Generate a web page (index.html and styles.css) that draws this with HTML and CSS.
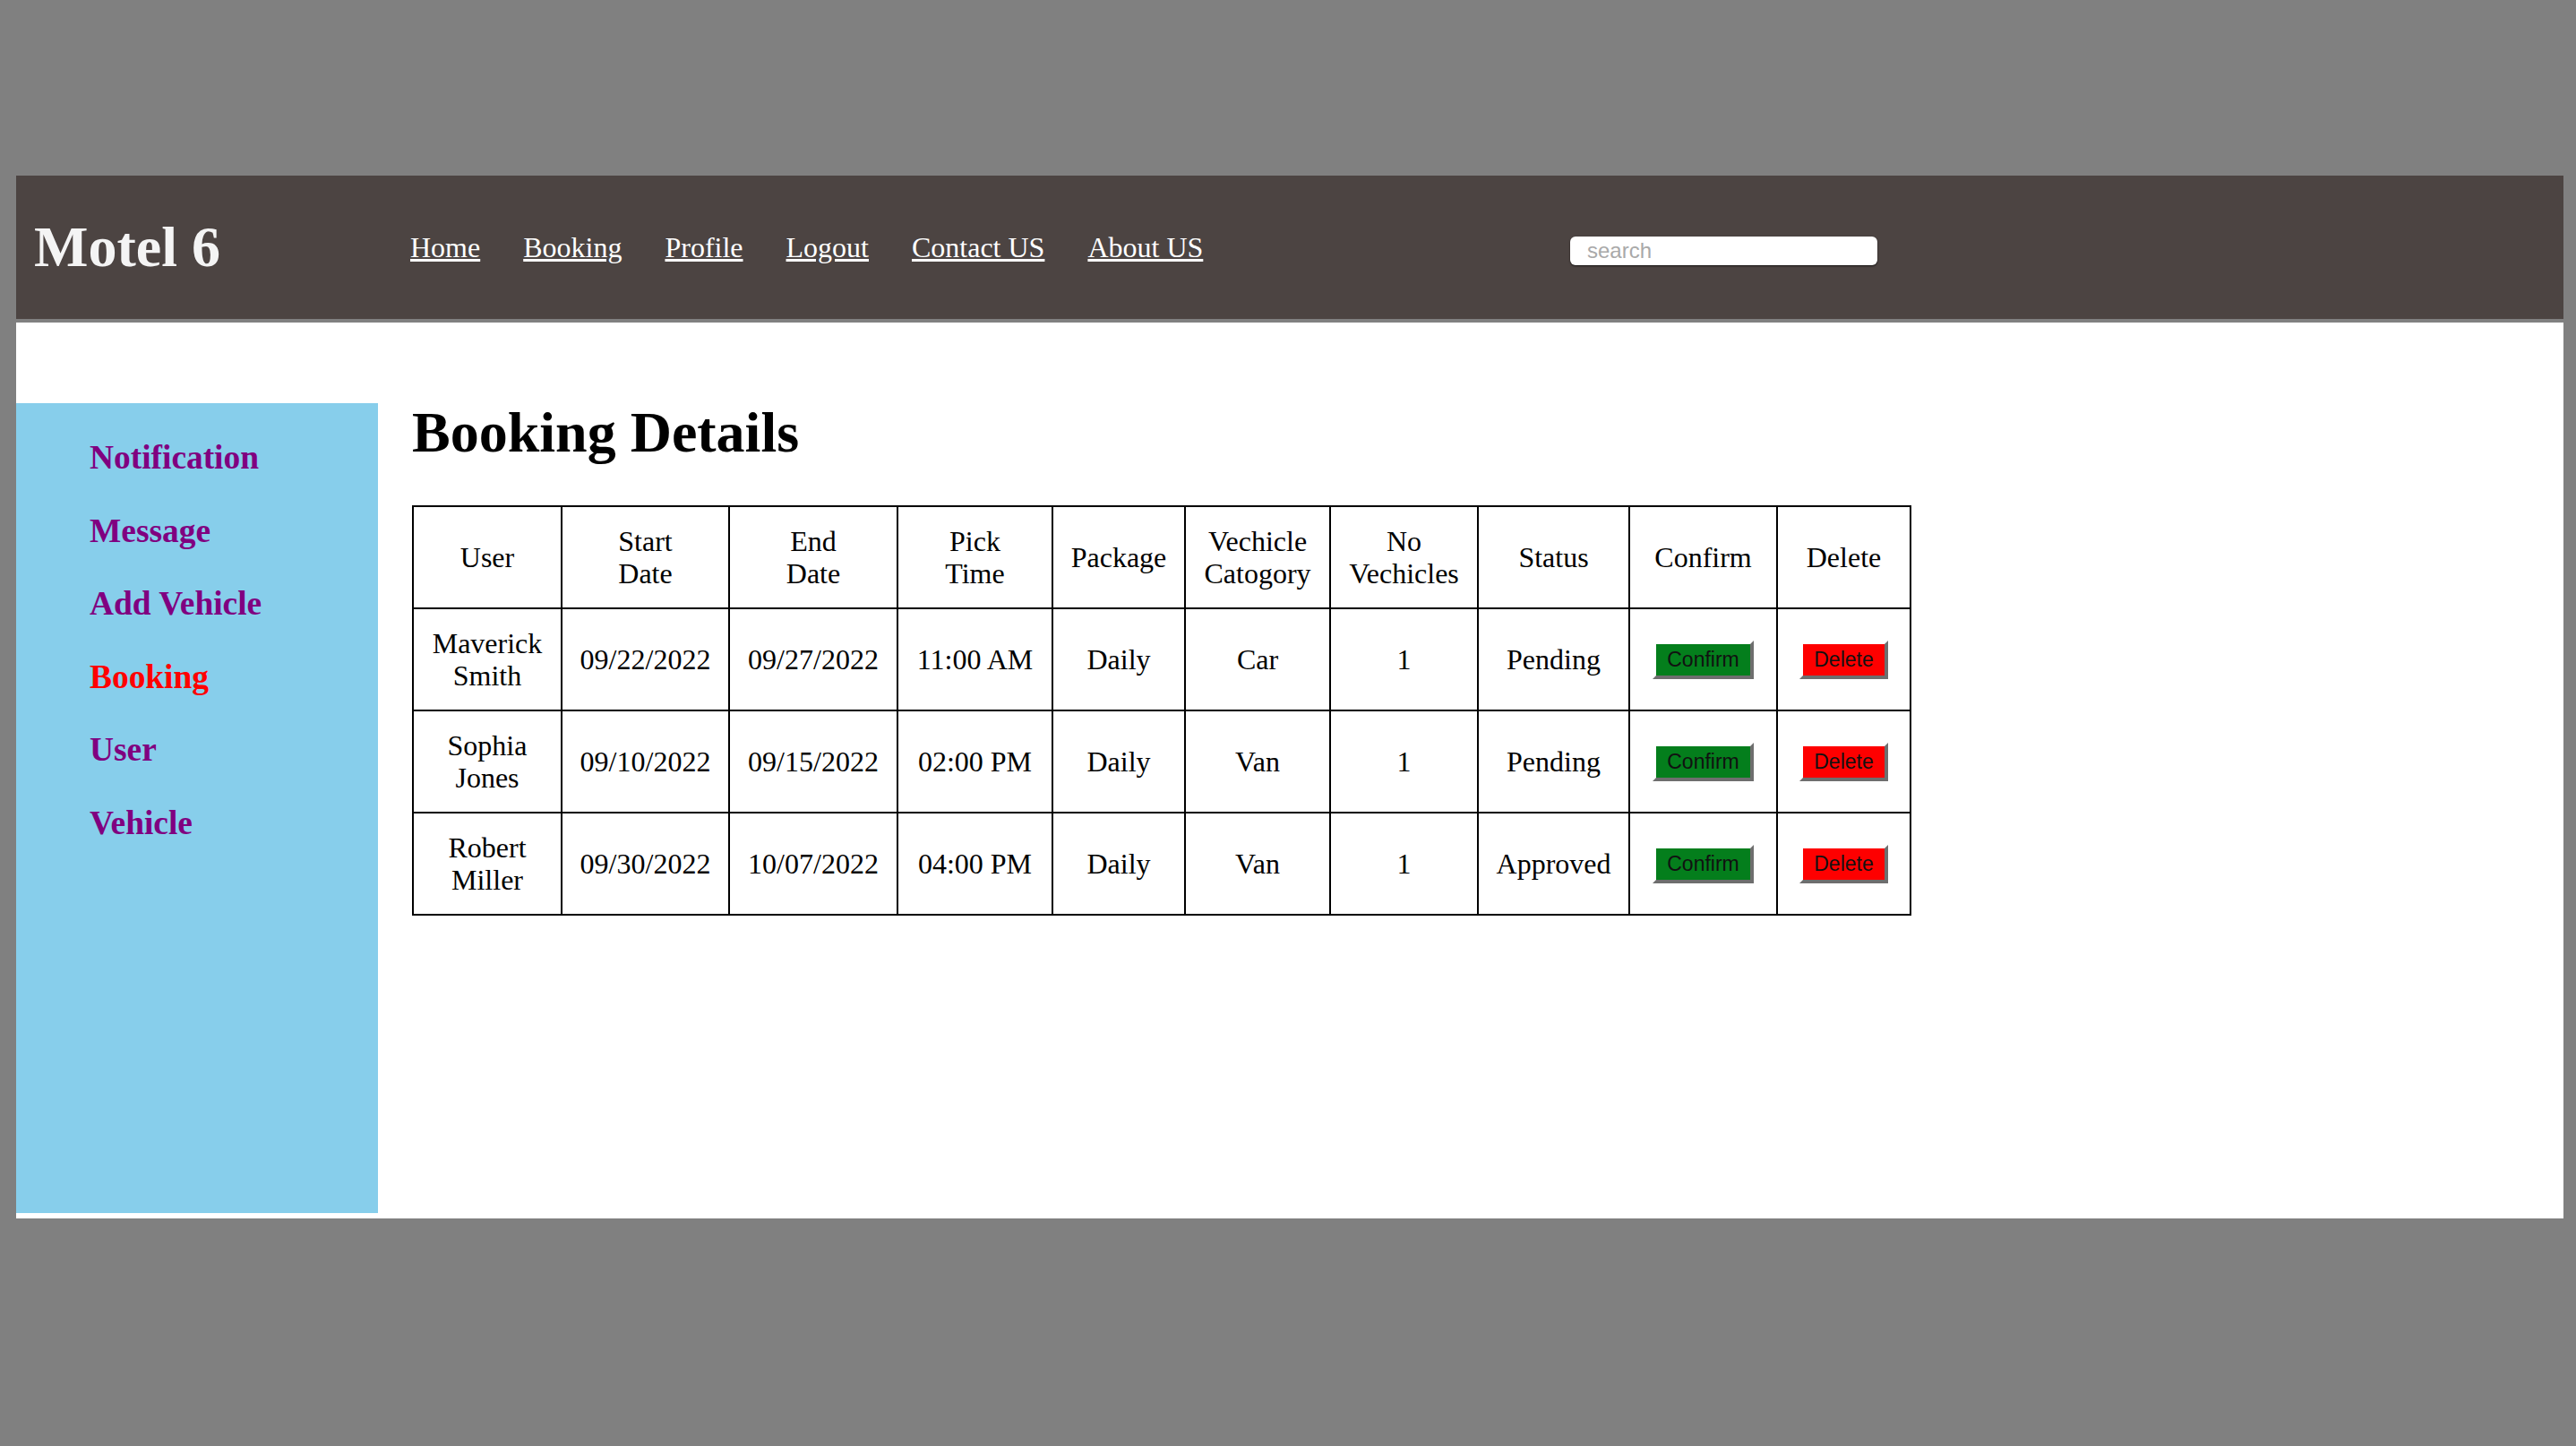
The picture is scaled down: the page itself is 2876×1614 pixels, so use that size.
FILE: index.html
```html
<!DOCTYPE html>
<html lang="en">
<head>
<meta charset="utf-8">
<title>Motel 6 - Booking Details</title>
<link rel="stylesheet" href="styles.css">
</head>
<body>
<header class="topbar">
  <div class="logo">Motel 6</div>
  <nav class="nav">
    <a href="#">Home</a>
    <a href="#">Booking</a>
    <a href="#">Profile</a>
    <a href="#">Logout</a>
    <a href="#">Contact US</a>
    <a href="#">About US</a>
  </nav>
  <input class="search" type="text" placeholder="search">
</header>
<div class="page">
  <aside class="sidebar">
    <a href="#" class="side-link">Notification</a>
    <a href="#" class="side-link">Message</a>
    <a href="#" class="side-link">Add Vehicle</a>
    <a href="#" class="side-link active">Booking</a>
    <a href="#" class="side-link">User</a>
    <a href="#" class="side-link">Vehicle</a>
  </aside>
  <main class="content">
    <h1 class="title">Booking Details</h1>
    <table class="bookings">
      <colgroup>
        <col class="c1"><col class="c2"><col class="c3"><col class="c4"><col class="c5">
        <col class="c6"><col class="c7"><col class="c8"><col class="c9"><col class="c10">
      </colgroup>
      <thead>
        <tr>
          <th>User</th>
          <th>Start<br>Date</th>
          <th>End<br>Date</th>
          <th>Pick<br>Time</th>
          <th>Package</th>
          <th>Vechicle<br>Catogory</th>
          <th>No<br>Vechicles</th>
          <th>Status</th>
          <th>Confirm</th>
          <th>Delete</th>
        </tr>
      </thead>
      <tbody>
        <tr>
          <td>Maverick<br>Smith</td>
          <td>09/22/2022</td>
          <td>09/27/2022</td>
          <td>11:00 AM</td>
          <td>Daily</td>
          <td>Car</td>
          <td>1</td>
          <td>Pending</td>
          <td><button class="btn btn-confirm">Confirm</button></td>
          <td><button class="btn btn-delete">Delete</button></td>
        </tr>
        <tr>
          <td>Sophia<br>Jones</td>
          <td>09/10/2022</td>
          <td>09/15/2022</td>
          <td>02:00 PM</td>
          <td>Daily</td>
          <td>Van</td>
          <td>1</td>
          <td>Pending</td>
          <td><button class="btn btn-confirm">Confirm</button></td>
          <td><button class="btn btn-delete">Delete</button></td>
        </tr>
        <tr>
          <td>Robert<br>Miller</td>
          <td>09/30/2022</td>
          <td>10/07/2022</td>
          <td>04:00 PM</td>
          <td>Daily</td>
          <td>Van</td>
          <td>1</td>
          <td>Approved</td>
          <td><button class="btn btn-confirm">Confirm</button></td>
          <td><button class="btn btn-delete">Delete</button></td>
        </tr>
      </tbody>
    </table>
  </main>
</div>
</body>
</html>
```

FILE: styles.css
```css
html, body {
  margin: 0;
  background: #808080;
}
body {
  padding: 196px 14px 254px 18px;
  font-family: "Liberation Serif", "Times New Roman", serif;
}

.topbar {
  height: 160px;
  background: #4c4442;
  display: flex;
  align-items: center;
  padding-left: 20px;
  margin-bottom: 4px;
}
.logo {
  width: 396px;
  flex-shrink: 0;
  font-size: 64px;
  font-weight: bold;
  line-height: 74px;
  color: #f4f4f4;
}
.nav {
  display: flex;
  font-size: 32px;
  line-height: 37px;
}
.nav a {
  color: #ffffff;
  margin: 0 24px;
  text-decoration: underline;
}
.search {
  margin: 8px 766px 0 auto;
  width: 343px;
  height: 32px;
  box-sizing: border-box;
  border: none;
  border-radius: 6px;
  background: #ffffff;
  box-shadow: 0 1px 2px rgba(0, 0, 0, 0.7);
  padding: 0 0 0 19px;
  font-family: "Liberation Sans", Arial, sans-serif;
  font-size: 24px;
  outline: none;
}
.search::placeholder {
  color: #a9a9a9;
}

.page {
  background: #ffffff;
  height: 1000px;
  display: flex;
  align-items: flex-start;
}
.sidebar {
  width: 404px;
  height: 904px;
  margin-top: 90px;
  box-sizing: border-box;
  background: #87ceeb;
  padding: 40px 0 0 82px;
  display: flex;
  flex-direction: column;
  gap: 39.5px;
}
.side-link {
  font-size: 37.4px;
  font-weight: bold;
  line-height: 42px;
  color: #800080;
  text-decoration: none;
}
.side-link.active {
  color: #ff0000;
}

.content {
  margin-left: 38px;
  padding-top: 86px;
}
.title {
  margin: 0 0 44px 0;
  font-size: 64px;
  line-height: 74px;
  font-weight: bold;
  color: #000000;
}

.bookings {
  border-collapse: collapse;
  table-layout: fixed;
  width: 1672px;
  font-size: 32px;
  line-height: 36px;
  color: #000000;
}
.bookings th,
.bookings td {
  border: 2px solid #000000;
  padding: 20px 0;
  text-align: center;
  vertical-align: middle;
  font-weight: normal;
}
.c1 { width: 166px; }
.c2 { width: 187px; }
.c3 { width: 188px; }
.c4 { width: 173px; }
.c5 { width: 148px; }
.c6 { width: 162px; }
.c7 { width: 165px; }
.c8 { width: 169px; }
.c9 { width: 165px; }
.c10 { width: 149px; }

.btn {
  height: 43px;
  box-sizing: border-box;
  padding: 0 12px;
  border-style: solid;
  border-width: 4px;
  border-color: #ffffff #6e6e6e #6e6e6e #ffffff;
  font-family: "Liberation Sans", Arial, sans-serif;
  font-size: 23px;
  line-height: 35px;
  color: #111111;
  vertical-align: middle;
}
.btn-confirm {
  background: #047e1c;
}
.btn-delete {
  background: #fe0000;
}
```
